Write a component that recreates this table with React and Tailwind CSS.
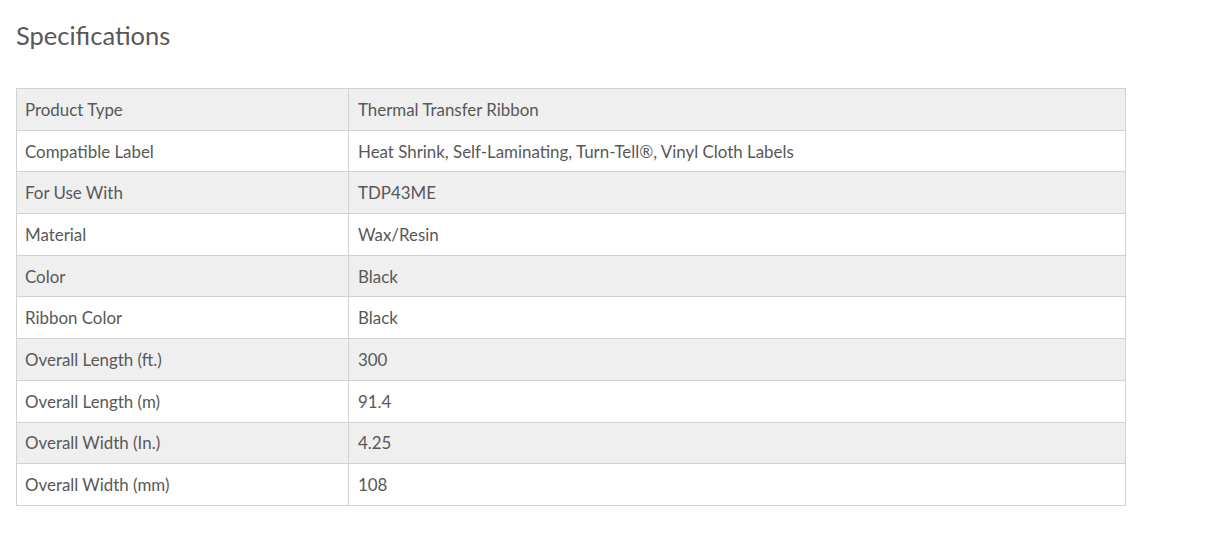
import React from "react";

const rows = [
  ["Product Type", "Thermal Transfer Ribbon"],
  ["Compatible Label", "Heat Shrink, Self-Laminating, Turn-Tell®, Vinyl Cloth Labels"],
  ["For Use With", "TDP43ME"],
  ["Material", "Wax/Resin"],
  ["Color", "Black"],
  ["Ribbon Color", "Black"],
  ["Overall Length (ft.)", "300"],
  ["Overall Length (m)", "91.4"],
  ["Overall Width (In.)", "4.25"],
  ["Overall Width (mm)", "108"],
];

export default function App() {
  return (
    <div className="w-[1208px] h-[544px] bg-white text-[#585858]" style={{ fontFamily: "Lato, 'Open Sans', sans-serif" }}>
      <div className="pl-4 pt-[20px]">
        <h2 className="text-[25.5px] leading-[30px] text-[#585858]">Specifications</h2>
        <table className="mt-[38px] w-[1110px] border-collapse border border-[#d2d2d2] text-[16.9px]">
          <tbody>
            {rows.map(([k, v], i) => (
              <tr key={k} className={i % 2 === 0 ? "bg-[#efefef] h-[41.7px]" : "bg-white h-[41.7px]"}>
                <td className="w-[332px] border border-[#d2d2d2] px-2 pt-[1px] pb-0 align-middle leading-[20px]">{k}</td>
                <td className="border border-[#d2d2d2] px-[9px] pt-[1px] pb-0 align-middle leading-[20px]">{v}</td>
              </tr>
            ))}
          </tbody>
        </table>
      </div>
    </div>
  );
}
